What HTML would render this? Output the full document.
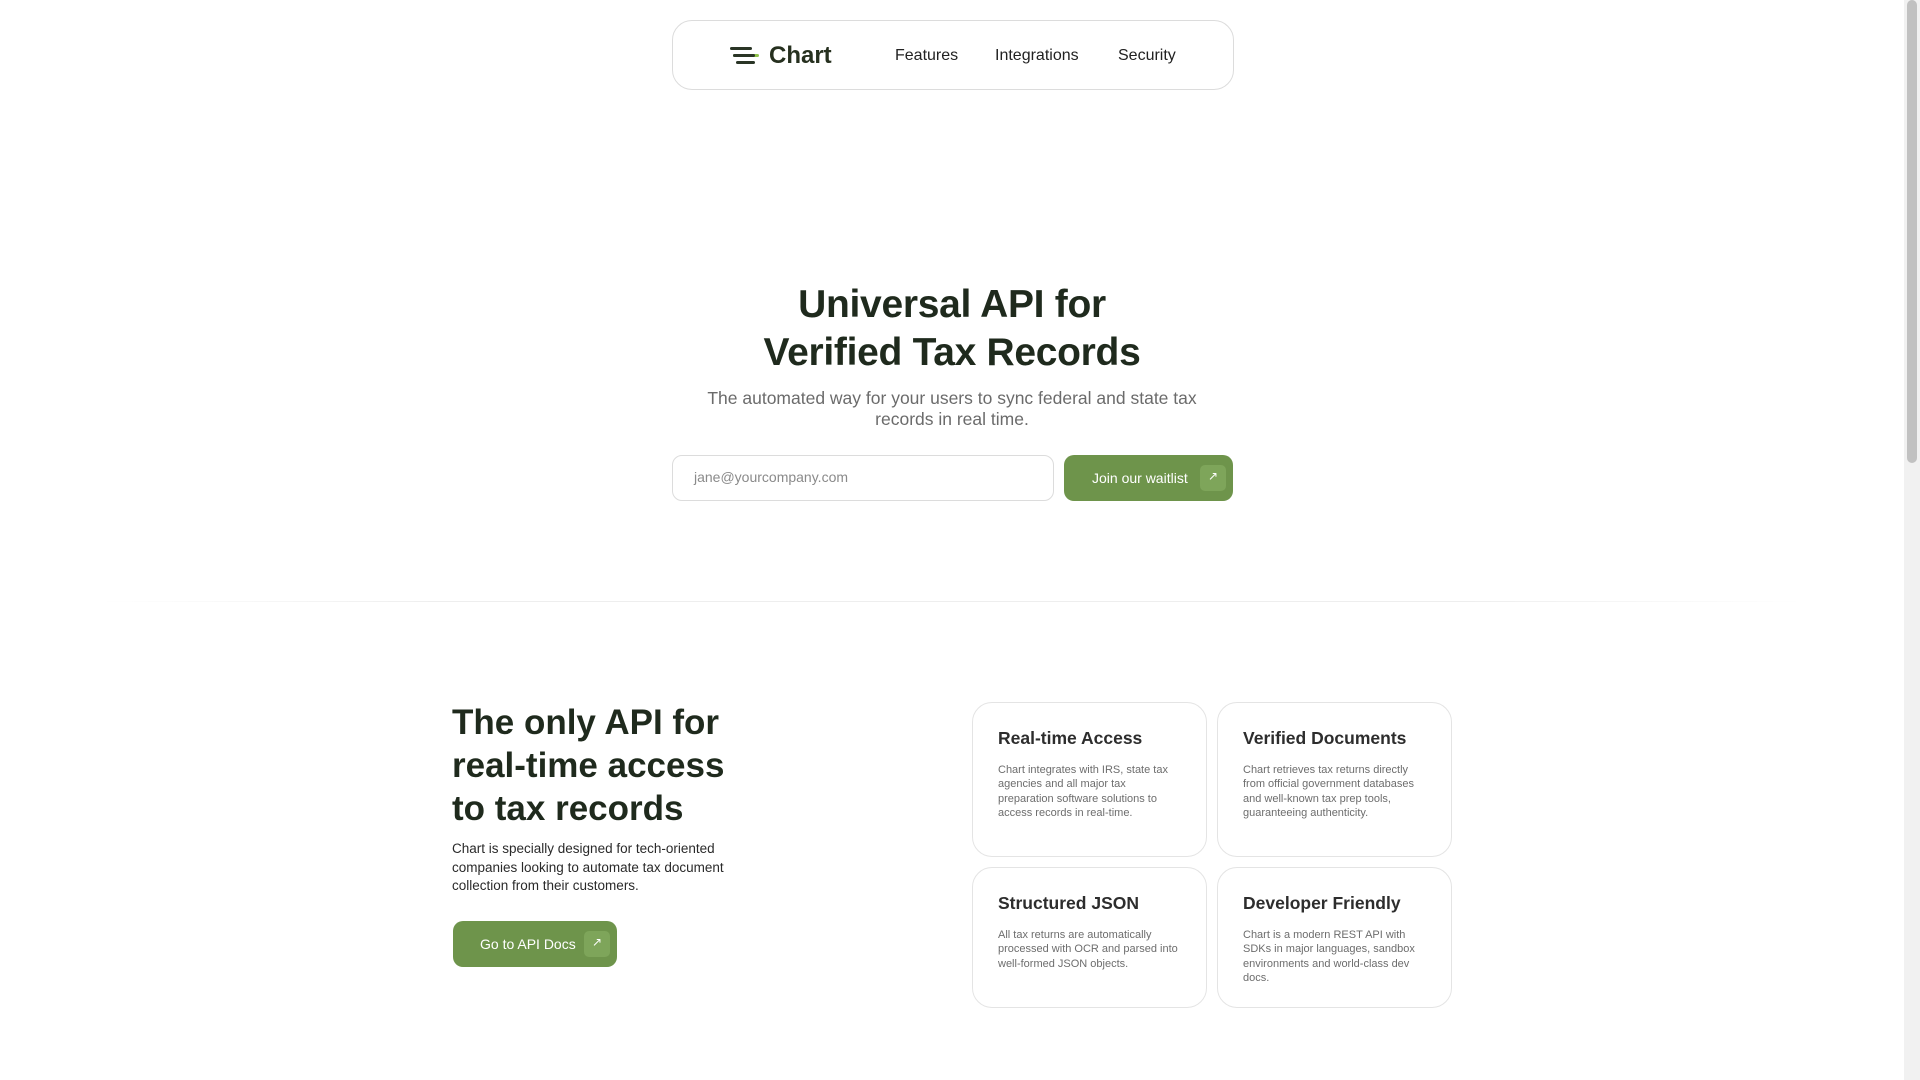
<!DOCTYPE html>
<html><head><meta charset="utf-8"><style>
*{box-sizing:border-box;margin:0;padding:0}
body{width:1920px;height:1080px;overflow:hidden;background:#fff;font-family:"Liberation Sans",sans-serif;color:#1f2a1d;position:relative}
.a{position:absolute}
.nav{left:672px;top:20px;width:562px;height:70px;border:1px solid #dcdcdc;border-radius:20px}
.nl{font-size:16px;color:#222;top:47px}
h1{position:absolute;left:0;width:1904px;text-align:center;top:281px;font-size:39px;line-height:48px;font-weight:600;color:#1f2a1d;letter-spacing:-0.3px}
.sub{left:0;width:1904px;text-align:center;top:388px;font-size:17.5px;line-height:21px;color:#6b6b6b}
.inp{left:672px;top:455px;width:382px;height:46px;border:1px solid #dcdcdc;border-radius:10px;font-size:14px;color:#8a8a8a;padding:13px 0 0 21px}
.btn{background:#6e944b;border-radius:10px;color:#fff;font-size:14px}
.arr{position:absolute;width:26px;height:26px;background:#7ea55a;border-radius:5px;top:10px}
.card{border:1px solid #e4e4e4;border-radius:20px;background:#fff}
.ct{position:absolute;left:25px;top:25px;font-size:17.5px;font-weight:600;color:#2d2d2d}
.cd{position:absolute;left:25px;top:60px;width:182px;font-size:11px;line-height:14.3px;color:#6d6d6d}
.sb{left:1904px;top:0;width:16px;height:1080px;background:#f1f1f1}
.th{left:1907px;top:0;width:10px;height:463px;background:#c1c1c1;border-radius:5px}
</style></head><body>
<div class="a nav"></div>
<svg class="a" style="left:730px;top:47px" width="30" height="18" viewBox="0 0 30 18"><rect x="0" y="0" width="22" height="3" rx="1.5" fill="#2a3526"/><rect x="3" y="7" width="26" height="3" rx="1.5" fill="#8fc24a"/><rect x="3" y="7" width="22" height="3" rx="1.5" fill="#2a3526"/><rect x="6" y="14" width="19" height="3" rx="1.5" fill="#2a3526"/></svg>
<div class="a" style="left:769px;top:42px;font-size:24px;font-weight:700;color:#26301f">Chart</div>
<div class="a nl" style="left:895px">Features</div>
<div class="a nl" style="left:995px">Integrations</div>
<div class="a nl" style="left:1118px">Security</div>
<h1>Universal API for<br>Verified Tax Records</h1>
<div class="a sub">The automated way for your users to sync federal and state tax<br>records in real time.</div>
<div class="a inp">jane@yourcompany.com</div>
<div class="a btn" style="left:1064px;top:455px;width:169px;height:46px"><span class="a" style="left:28px;top:15px">Join our waitlist</span><div class="arr" style="left:136px"><span style="position:absolute;left:8px;top:4px;font-size:12px">↗</span></div></div>
<div class="a" style="left:100px;top:601px;width:1704px;height:1px;background:linear-gradient(90deg,rgba(230,230,230,0),#eee 20%,#eee 80%,rgba(230,230,230,0))"></div>
<div class="a" style="left:452px;top:701px;font-size:35px;line-height:43px;font-weight:600;color:#1f2a1d">The only API for<br>real-time access<br>to tax records</div>
<div class="a" style="left:452px;top:840px;font-size:13.5px;line-height:18.5px;color:#2a2a2a">Chart is specially designed for tech-oriented<br>companies looking to automate tax document<br>collection from their customers.</div>
<div class="a btn" style="left:453px;top:921px;width:164px;height:46px"><span class="a" style="left:27px;top:15px">Go to API Docs</span><div class="arr" style="left:131px"><span style="position:absolute;left:8px;top:4px;font-size:12px">↗</span></div></div>
<div class="a card" style="left:972px;top:702px;width:235px;height:155px"><div class="ct">Real-time Access</div><div class="cd">Chart integrates with IRS, state tax agencies and all major tax preparation software solutions to access records in real-time.</div></div>
<div class="a card" style="left:1217px;top:702px;width:235px;height:155px"><div class="ct">Verified Documents</div><div class="cd">Chart retrieves tax returns directly from official government databases and well-known tax prep tools, guaranteeing authenticity.</div></div>
<div class="a card" style="left:972px;top:867px;width:235px;height:141px"><div class="ct">Structured JSON</div><div class="cd">All tax returns are automatically processed with OCR and parsed into well-formed JSON objects.</div></div>
<div class="a card" style="left:1217px;top:867px;width:235px;height:141px"><div class="ct">Developer Friendly</div><div class="cd">Chart is a modern REST API with SDKs in major languages, sandbox environments and world-class dev docs.</div></div>
<div class="a sb"></div><div class="a th"></div>
</body></html>
